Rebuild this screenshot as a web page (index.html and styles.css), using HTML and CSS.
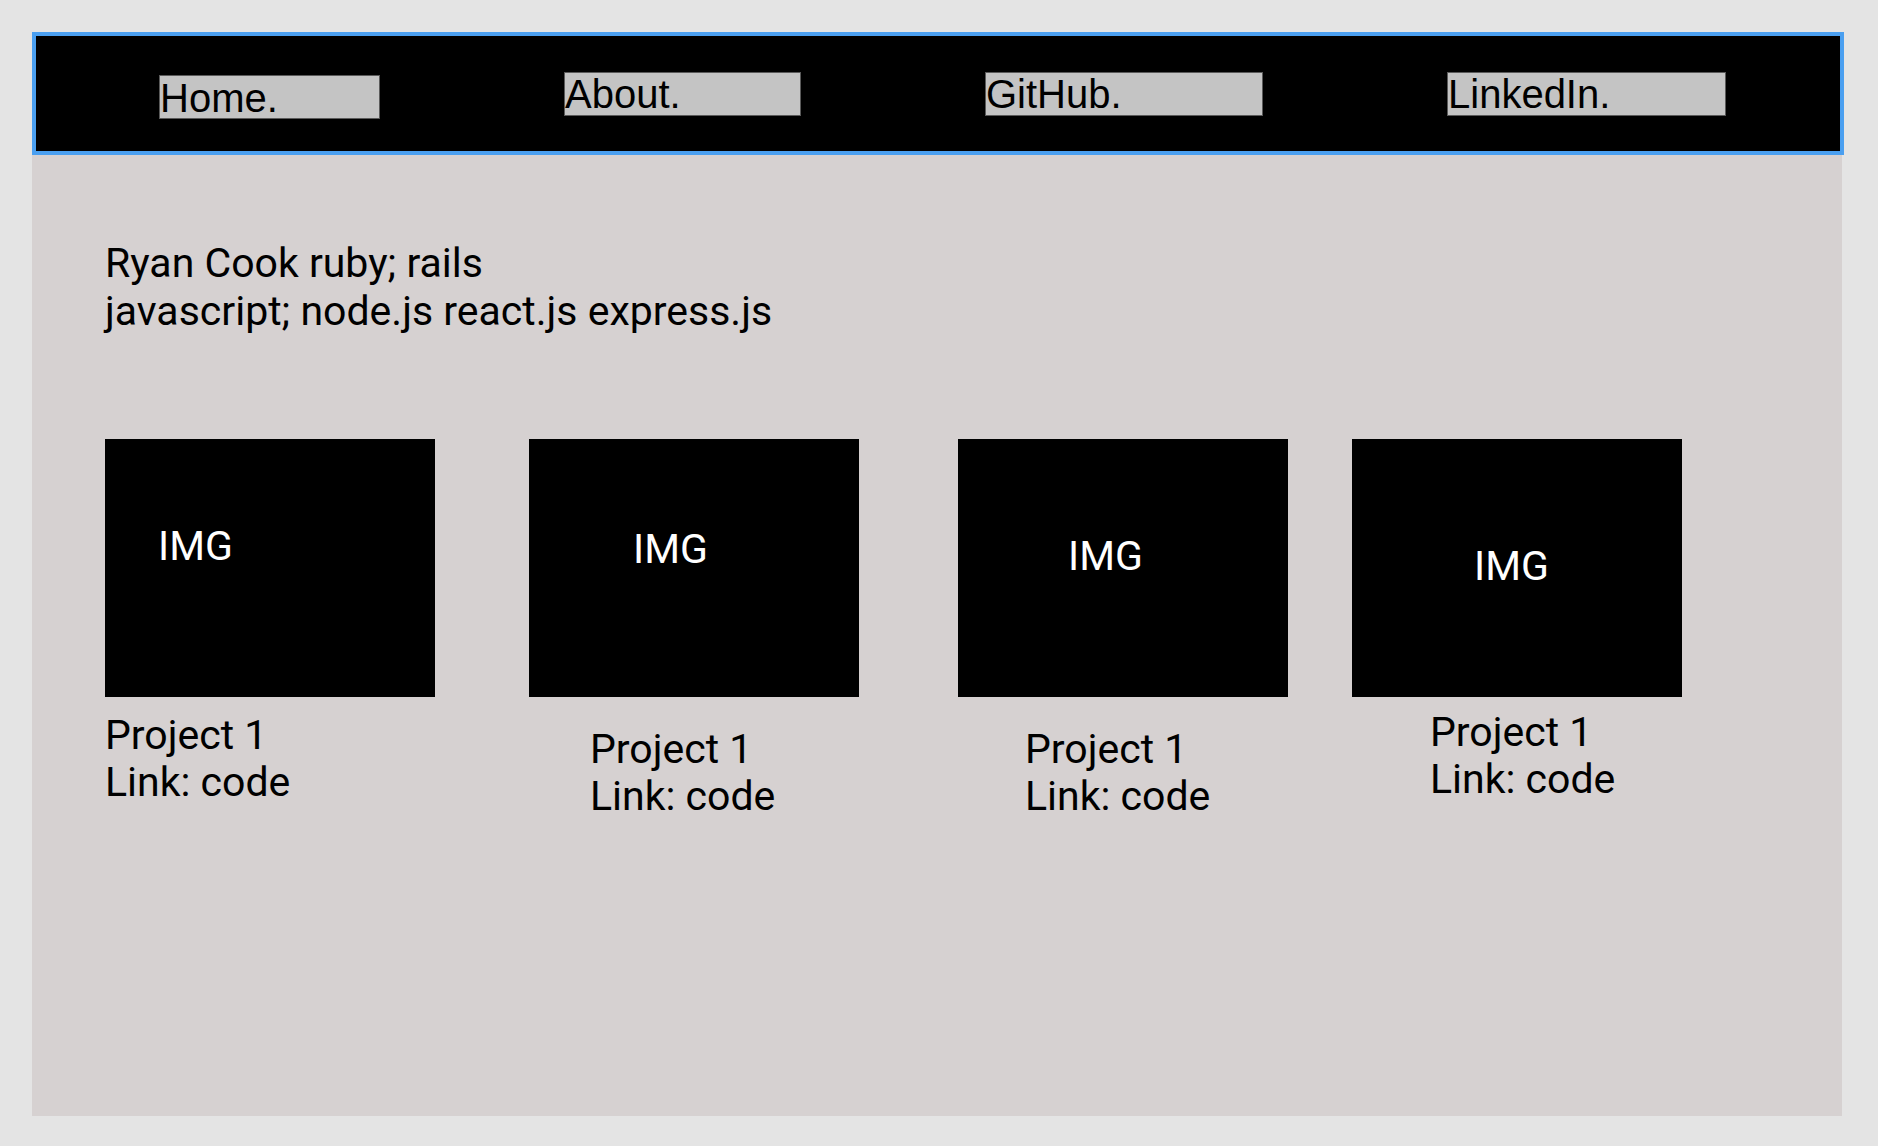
FILE: index.html
```html
<!DOCTYPE html>
<html lang="en">
<head>
    <meta charset="UTF-8">
    <meta name="viewport" content="width=device-width, initial-scale=1.0">
    <title>Ryan Cook</title>
    <link rel="stylesheet" href="styles.css">
</head>
<body>
    <div class="page">
        <div class="header">
            <nav class="menu">
                <a class="home" href="#">Home.</a>
                <a class="about" href="#">About.</a>
                <a class="github" href="#">GitHub.</a>
                <a class="linkedin" href="#">LinkedIn.</a>
            </nav>
        </div>

        <section class="content">
            <p class="intro">Ryan Cook ruby; rails<br>javascript; node.js react.js express.js</p>

            <div class="projects">
                <div class="card card-1">
                    <div class="thumb"><span>IMG</span></div>
                    <p class="card-text">Project 1<br>Link: code</p>
                </div>
                <div class="card card-2">
                    <div class="thumb"><span>IMG</span></div>
                    <p class="card-text">Project 1<br>Link: code</p>
                </div>
                <div class="card card-3">
                    <div class="thumb"><span>IMG</span></div>
                    <p class="card-text">Project 1<br>Link: code</p>
                </div>
                <div class="card card-4">
                    <div class="thumb"><span>IMG</span></div>
                    <p class="card-text">Project 1<br>Link: code</p>
                </div>
            </div>
        </section>
    </div>
</body>
</html>
```

FILE: styles.css
```css
* {
    margin: 0;
    padding: 0;
    box-sizing: border-box;
}

body {
    font-family: Roboto, 'Liberation Sans', sans-serif;
    background-color: #e4e4e4;
    padding: 32px 0 0 32px;
    color: #000;
}

.page {
    width: 1810px;
    height: 1084px;
    background-color: #d6d1d1;
}

/* top bar */
.header {
    width: 1812px;
    height: 123px;
    background-color: #000;
    border: 4px solid #4a9ff0;
    display: flex;
    align-items: center;
    padding-left: 123px;
}

.menu {
    display: flex;
    align-items: center;
    gap: 184px;
}

.menu a {
    display: block;
    height: 44px;
    padding-top: 1px;
    font-family: 'Liberation Sans', Arial, sans-serif;
    font-size: 40px;
    line-height: 40px;
    color: #000;
    text-decoration: none;
    background-color: #c4c4c4;
    border: 1px solid #5a5a5a;
}

.menu .home { width: 221px; margin-top: 6px; padding-top: 2px; }
.menu .about { width: 237px; }
.menu .github { width: 278px; }
.menu .linkedin { width: 279px; }

/* main area */
.content {
    padding: 84px 0 0 73px;
}

.intro {
    font-size: 41px;
    line-height: 48px;
}

.projects {
    display: flex;
    align-items: flex-start;
    margin-top: 104px;
}

.card {
    width: 330px;
}

.thumb {
    height: 258px;
    background-color: #000;
    color: #fff;
    font-size: 41px;
    line-height: 48px;
}

.card-text {
    font-size: 41px;
    line-height: 47px;
}

/* each card sits a little differently */
.card-1 .thumb { padding: 83px 0 0 53px; }
.card-1 .card-text { margin-top: 15px; }

.card-2 { margin-left: 94px; }
.card-2 .thumb { padding: 86px 0 0 104px; }
.card-2 .card-text { margin: 29px 0 0 61px; }

.card-3 { margin-left: 99px; }
.card-3 .thumb { padding: 93px 0 0 110px; }
.card-3 .card-text { margin: 29px 0 0 67px; }

.card-4 { margin-left: 64px; }
.card-4 .thumb { padding: 103px 0 0 122px; }
.card-4 .card-text { margin: 12px 0 0 78px; }
```
